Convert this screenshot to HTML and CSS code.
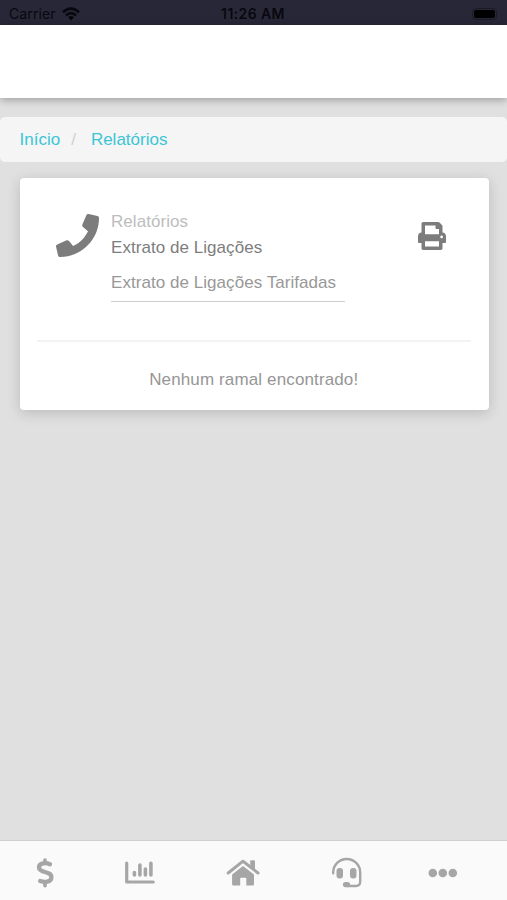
FILE: index.html
```html
<!DOCTYPE html>
<html lang="pt-BR">
<head>
<meta charset="utf-8">
<title>Relatórios</title>
<link rel="stylesheet" href="styles.css">
</head>
<body>
<div class="status">
  <div class="carrier"><span>Carrier</span>
    <svg width="18" height="14" viewBox="0 0 18 14" fill="none" stroke="#07070d" stroke-width="2.6"><path d="M1 5.2Q9-2 17 5.2"/><path d="M3.9 8.4Q9 4 14.1 8.4"/><path d="M6 10.3Q9 7.7 12 10.3L9 13.5z" fill="#07070d" stroke="none"/></svg>
  </div>
  <span class="clock">11:26 AM</span>
  <div class="power"><i class="battery"></i></div>
</div>
<header class="header"></header>
<main class="content">
  <nav class="breadcrumb"><a>Início</a><span class="slash">/</span><a>Relatórios</a></nav>
  <section class="card">
    <div class="summary">
      <svg class="phone" width="43" height="43" viewBox="0 0 512 512"><path d="M493.4 24.6l-104-24c-11.3-2.6-22.9 3.3-27.5 13.9l-48 112c-4.2 9.8-1.4 21.3 6.9 28l60.6 49.6c-36 76.7-98.9 140.5-177.2 177.2l-49.6-60.6c-6.8-8.3-18.2-11.1-28-6.9l-112 48C3.9 366.5-2 378.1.6 389.4l24 104C27.1 504.2 36.7 512 48 512c256.1 0 464-207.5 464-464 0-11.2-7.7-20.9-18.6-23.4z"/></svg>
      <div class="titles">
        <div class="eyebrow">Relatórios</div>
        <div class="title">Extrato de Ligações</div>
        <div class="select">Extrato de Ligações Tarifadas</div>
      </div>
      <svg class="print" width="28" height="28" viewBox="0 0 512 512"><path d="M448 192V77.25c0-8.49-3.37-16.62-9.37-22.63L393.37 9.37c-6-6-14.14-9.37-22.63-9.37H96C78.33 0 64 14.33 64 32v160c-35.35 0-64 28.65-64 64v112c0 8.84 7.16 16 16 16h48v96c0 17.67 14.33 32 32 32h320c17.67 0 32-14.33 32-32v-96h48c8.84 0 16-7.16 16-16V256c0-35.35-28.65-64-64-64zm-64 256H128v-96h256v96zm0-224H128V64h192v48c0 8.84 7.16 16 16 16h48v96zm48 72c-13.25 0-24-10.75-24-24 0-13.26 10.75-24 24-24s24 10.74 24 24c0 13.25-10.75 24-24 24z"/></svg>
    </div>
    <p class="empty">Nenhum ramal encontrado!</p>
  </section>
</main>
<nav class="tabs">
  <svg width="34" height="34" viewBox="28 856 34 34" fill="none" stroke="#a6a6a6" stroke-width="4.3" stroke-linecap="round" stroke-linejoin="round"><path d="M50 864.200C46.500 862.800 39 862.200 39 867.400C39 873.200 51.400 870.700 51.400 877.200C51.400 882.600 44 882.600 40.200 881"/><path d="M45 860V863M45 882.500V885.700" stroke-width="3.600"/></svg>
  <svg width="34" height="34" viewBox="123 856 34 34" fill="none" stroke="#a6a6a6" stroke-linecap="round" stroke-linejoin="round"><path d="M126.700 863.200V882H153.200" stroke-width="3.200"/><path d="M134.400 872.500V875M139.900 865V875M145.400 869V875M150.900 863.200V875" stroke-width="3.600"/></svg>
  <svg width="34" height="34" viewBox="226 856 34 34" fill="#a6a6a6"><path d="M228.200 873L243 861.200L258 873" fill="none" stroke="#a6a6a6" stroke-width="3" stroke-linecap="round" stroke-linejoin="round"/><path d="M250.200 861.200Q250.200 860.200 251.200 860.200H254Q255 860.200 255 861.200V870L250.200 866.200z"/><path d="M243 866L254 874.600V884.200Q254 885.500 252.700 885.500H246.300V878.500Q246.300 877.700 245.500 877.700H241Q240.200 877.700 240.200 878.500V885.500H233.400Q232.100 885.500 232.100 884.200V874.600z"/></svg>
  <svg width="34" height="34" viewBox="330 856 34 34" fill="none" stroke="#a6a6a6" stroke-width="2.400" stroke-linecap="round"><path d="M333.200 873.200V872.500A13.500 13.500 0 0 1 360.200 872.500V881.600Q360.200 886 355.800 886H347.500"/><path d="M345.500 884.600H347.500" stroke-width="5.200"/><rect x="336.500" y="868" width="6.500" height="10.400" rx="3" fill="#a6a6a6" stroke="none"/><rect x="350" y="868" width="6.500" height="10.400" rx="3" fill="#a6a6a6" stroke="none"/></svg>
  <svg width="34" height="34" viewBox="425.500 856 34 34" fill="#a6a6a6"><circle cx="432.300" cy="873" r="4.300"/><circle cx="442.300" cy="873" r="4.300"/><circle cx="452.300" cy="873" r="4.300"/></svg>
</nav>
</body>
</html>
```
FILE: styles.css
```css
* { box-sizing: border-box; }
body {
  margin: 0;
  height: 900px;
  display: flex;
  flex-direction: column;
  overflow: hidden;
  background: #e0e0e0;
  font: 17px/24px "Liberation Sans", sans-serif;
}
.status {
  height: 25px;
  padding: 2px 10px 0 9px;
  display: grid;
  grid-template-columns: 1fr auto 1fr;
  align-items: center;
  background: #272737;
  color: #07070d;
  font: 14px/22px Inter, sans-serif;
}
.carrier { display: flex; align-items: center; gap: 6px; letter-spacing: .1px; }
.clock { font-weight: 600; letter-spacing: .4px; }
.power { display: flex; justify-content: flex-end; }
.battery {
  width: 25px;
  height: 12px;
  border: 1px solid #1b1b28;
  border-radius: 4px;
  background: #000 content-box;
  padding: 1px;
}
.header { height: 73px; flex: none; background: #fff; box-shadow: 0 2px 8px rgba(0, 0, 0, .3); }
.content { flex: 1; padding-top: 19px; }
.breadcrumb {
  height: 45px;
  padding: 0 20px 0 19.5px;
  display: flex;
  align-items: center;
  background: #f5f5f5;
  border-radius: 5px;
  color: #3cc5d4;
}
.slash { margin: 0 15px 0 11px; color: #d0d0d0; }
.card {
  height: 232px;
  margin: 16px 18px 0 19.5px;
  padding: 0 18.5px 0 17.5px;
  background: #fff;
  border-radius: 4px;
  box-shadow: 0 3px 14px rgba(0, 0, 0, .17);
}
.summary {
  height: 164px;
  padding: 32px 24.5px 0 19px;
  display: flex;
  align-items: flex-start;
  border-bottom: 2px solid #f3f3f3;
}
.summary svg { fill: #7c7c7c; }
.phone { margin-top: 4px; }
.titles { width: 234px; margin-left: 12px; letter-spacing: .05px; }
.eyebrow { color: #bdbdbd; }
.title { margin-top: 2px; color: #7d7d7d; }
.select { height: 42px; padding-top: 11px; color: #989898; border-bottom: 1px solid #cecece; }
.print { margin: 12px 0 0 auto; }
.empty { margin: 26px 0 0; text-align: center; color: #969696; letter-spacing: .13px; }
.tabs {
  height: 60px;
  flex: none;
  padding: 15px 0 0 28px;
  display: grid;
  grid-template-columns: 95px 103px 104px 95.5px 34px;
  background: #fafafa;
  border-top: 1px solid #d0d0d0;
}
```
